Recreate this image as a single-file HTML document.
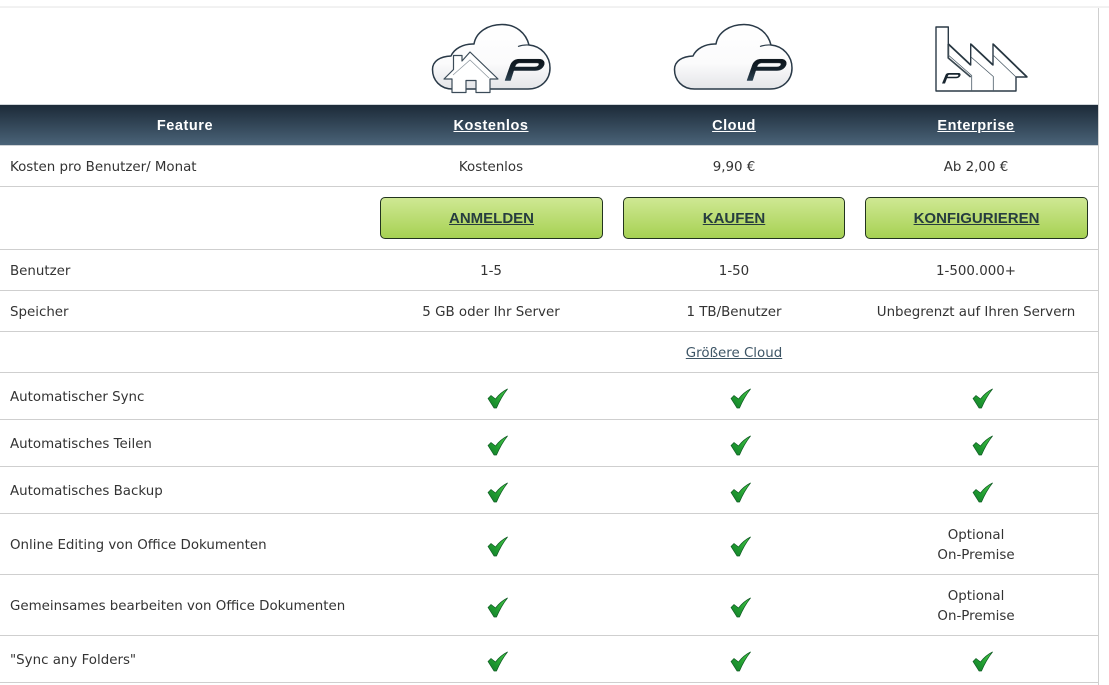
<!DOCTYPE html>
<html lang="de"><head><meta charset="utf-8">
<style>
html,body{margin:0;padding:0;background:#fff;width:1109px;height:685px;overflow:hidden}
body{position:relative;font-family:"DejaVu Sans","Liberation Sans",sans-serif;font-size:13.4px;color:#333}
.t{position:absolute;white-space:nowrap;line-height:20px;margin-top:2px}
.c{transform:translateX(-50%);text-align:center}
.l{position:absolute;left:0;width:1098px;height:1px;background:#cfcfcf}
.h{position:absolute;left:0;top:104px;width:1098px;height:42px;background:linear-gradient(#1c2a38,#4a6378);background-clip:padding-box;border-top:1px solid #d0d5d9;border-bottom:1px solid #cfd3d6;box-sizing:border-box}
.ht{position:absolute;top:116px;line-height:20px;color:#fff;font-weight:bold;font-size:14.5px;transform:translateX(-50%);white-space:nowrap;font-family:"Liberation Sans",sans-serif;letter-spacing:.55px}
.b{position:absolute;top:197px;height:42px;box-sizing:border-box;border:1px solid #22331f;border-radius:5px;background:linear-gradient(#cfe893,#a6d153);text-align:center;line-height:42px;font-family:"Liberation Sans",sans-serif;font-weight:bold;font-size:15px;color:#263c3f;text-decoration:underline}
svg{position:absolute;left:0;top:0}
</style></head><body>
<div style="position:absolute;left:0;top:0;width:1109px;height:8px;background:linear-gradient(#fff 0,#fff 6px,#e6e6e6 7px,#fbfbfb 8px)"></div>
<div style="position:absolute;left:1098px;top:8px;width:1px;height:677px;background:#cfcfcf"></div>
<div class="h"></div>
<div class="ht" style="left:185px;text-decoration:none">Feature</div>
<div class="ht" style="left:491px;text-decoration:underline">Kostenlos</div>
<div class="ht" style="left:734px;text-decoration:underline">Cloud</div>
<div class="ht" style="left:976px;text-decoration:underline">Enterprise</div>

<div class="l" style="top:186px"></div><div class="l" style="top:249px"></div>
<div class="l" style="top:290px"></div><div class="l" style="top:331px"></div>
<div class="l" style="top:372px"></div><div class="l" style="top:419px"></div>
<div class="l" style="top:466px"></div><div class="l" style="top:513px"></div>
<div class="l" style="top:574px"></div><div class="l" style="top:635px"></div>
<div class="l" style="top:682px"></div>

<div class="t" style="left:10px;top:156px">Kosten pro Benutzer/ Monat</div>
<div class="t c" style="left:491px;top:156px">Kostenlos</div>
<div class="t c" style="left:734px;top:156px">9,90 €</div>
<div class="t c" style="left:976px;top:156px">Ab 2,00 €</div>

<div class="b" style="left:380px;width:223px">ANMELDEN</div>
<div class="b" style="left:623px;width:222px">KAUFEN</div>
<div class="b" style="left:865px;width:223px">KONFIGURIEREN</div>

<div class="t" style="left:10px;top:260px">Benutzer</div>
<div class="t c" style="left:491px;top:260px">1-5</div>
<div class="t c" style="left:734px;top:260px">1-50</div>
<div class="t c" style="left:976px;top:260px">1-500.000+</div>

<div class="t" style="left:10px;top:301px">Speicher</div>
<div class="t c" style="left:491px;top:301px">5 GB oder Ihr Server</div>
<div class="t c" style="left:734px;top:301px">1 TB/Benutzer</div>
<div class="t c" style="left:976px;top:301px">Unbegrenzt auf Ihren Servern</div>

<div class="t c" style="left:734px;top:342px;color:#3d5566;text-decoration:underline">Größere Cloud</div>

<div class="t" style="left:10px;top:386px">Automatischer Sync</div>
<div class="t" style="left:10px;top:433px">Automatisches Teilen</div>
<div class="t" style="left:10px;top:480px">Automatisches Backup</div>
<div class="t" style="left:10px;top:534px">Online Editing von Office Dokumenten</div>
<div class="t" style="left:10px;top:595px">Gemeinsames bearbeiten von Office Dokumenten</div>
<div class="t" style="left:10px;top:649px">"Sync any Folders"</div>

<div class="t c" style="left:976px;top:524px">Optional</div>
<div class="t c" style="left:976px;top:544px">On-Premise</div>
<div class="t c" style="left:976px;top:585px">Optional</div>
<div class="t c" style="left:976px;top:605px">On-Premise</div>

<svg width="1109" height="685" viewBox="0 0 1109 685">
<defs>
<linearGradient id="cg" x1="0" y1="0" x2="0" y2="1"><stop offset="0" stop-color="#fff"/><stop offset=".6" stop-color="#fbfbfc"/><stop offset="1" stop-color="#e4e5e8"/></linearGradient>
<linearGradient id="pg" x1="0" y1="1" x2="0" y2="0"><stop offset="0" stop-color="#2c4252"/><stop offset=".5" stop-color="#15222c"/><stop offset="1" stop-color="#0c141b"/></linearGradient>
<linearGradient id="ck" x1="1" y1="0" x2="0" y2="1"><stop offset="0" stop-color="#4ad04a"/><stop offset=".6" stop-color="#1f9a30"/><stop offset="1" stop-color="#127a2a"/></linearGradient>
<g id="cloud">
<path d="M20.500 65C8 65 .5 56 .5 45.500C.5 37 8 32.500 19 32C22 25 31 19.500 42 20C44 8 56 .5 70 .5C84 .5 94 9 97 21C109 22 118 32 118 44C118 56 109 65 96 65Z" fill="url(#cg)" stroke="#2a3a48" stroke-width="1.500" stroke-linejoin="round"/>
<path d="M86 22.500C90 21 94 20.800 97 21" fill="none" stroke="#2a3a48" stroke-width="1.200"/>
<path d="M73 56.500L78.500 41C80 37 83 35.300 87 35.200L107 35.200C111.500 35.200 113 37.800 112 41C110.500 44.800 107 46.500 103 46.500L81.500 46.500L82.800 43L102.500 43C105 43 106.500 42 107 40.500C107.300 39.500 106.500 38.900 105 38.900L88 38.900C85.500 38.900 84 40 83 42.500L78.500 56.500Z" fill="url(#pg)" stroke="url(#pg)" stroke-width=".5"/>
</g>
<g id="check">
<path d="M0 9.500L3 6.500L7.500 10C10.500 6 14.500 2.500 19.500 0C15.500 5 11.500 12 8.500 19L6 19Z" fill="url(#ck)" stroke="#0e5a22" stroke-width=".7" stroke-linejoin="round"/>
</g>
</defs>

<use href="#cloud" x="432" y="24"/>
<use href="#cloud" x="674" y="24"/>

<path d="M452 92.500V79H444L453.500 69.500V55.500H462V61L470 52L498 79H490V92.500H476V80.500H466V92.500Z" fill="#fff" stroke="#3b4b58" stroke-width="1.200" stroke-linejoin="round"/>
<path d="M453 75L470 60L489 78" fill="none" stroke="#8a949c" stroke-width=".7"/>

<path d="M936 91V27H948.300V44L970.700 65V44L993 65V44L1027 77H1016V91Z" fill="#fff" stroke="#2b3a47" stroke-width="1.400" stroke-linejoin="round"/>
<path d="M948.300 44V58L970.700 77M948.300 44L970.700 65M970.700 44L993 65M993 44L1027 77" fill="none" stroke="#26353f" stroke-width="1.800" stroke-linejoin="round" opacity=".9"/>
<path d="M948.300 55L971.700 75.500V91M971 57L993.300 76.500V91M993 55L1016 77" fill="none" stroke="#4a5a66" stroke-width=".8"/>
<path d="M942 83.500L945.500 75C946 73.700 947.200 73 949 73H958.500C960.500 73 961 74.300 960.300 75.800C959.500 77.400 958 78.300 956 78.300H947L947.600 76.700H956C957.500 76.700 958.200 76.200 958.300 75.500C958.400 75 958 74.800 957 74.800H949.500C948.700 74.800 948.300 75.100 948 75.800L945 83.500Z" fill="#182630"/>

<use href="#check" x="488" y="389"/><use href="#check" x="731" y="389"/><use href="#check" x="973" y="389"/>
<use href="#check" x="488" y="436"/><use href="#check" x="731" y="436"/><use href="#check" x="973" y="436"/>
<use href="#check" x="488" y="483"/><use href="#check" x="731" y="483"/><use href="#check" x="973" y="483"/>
<use href="#check" x="488" y="537"/><use href="#check" x="731" y="537"/>
<use href="#check" x="488" y="598"/><use href="#check" x="731" y="598"/>
<use href="#check" x="488" y="652"/><use href="#check" x="731" y="652"/><use href="#check" x="973" y="652"/>
</svg>
</body></html>
